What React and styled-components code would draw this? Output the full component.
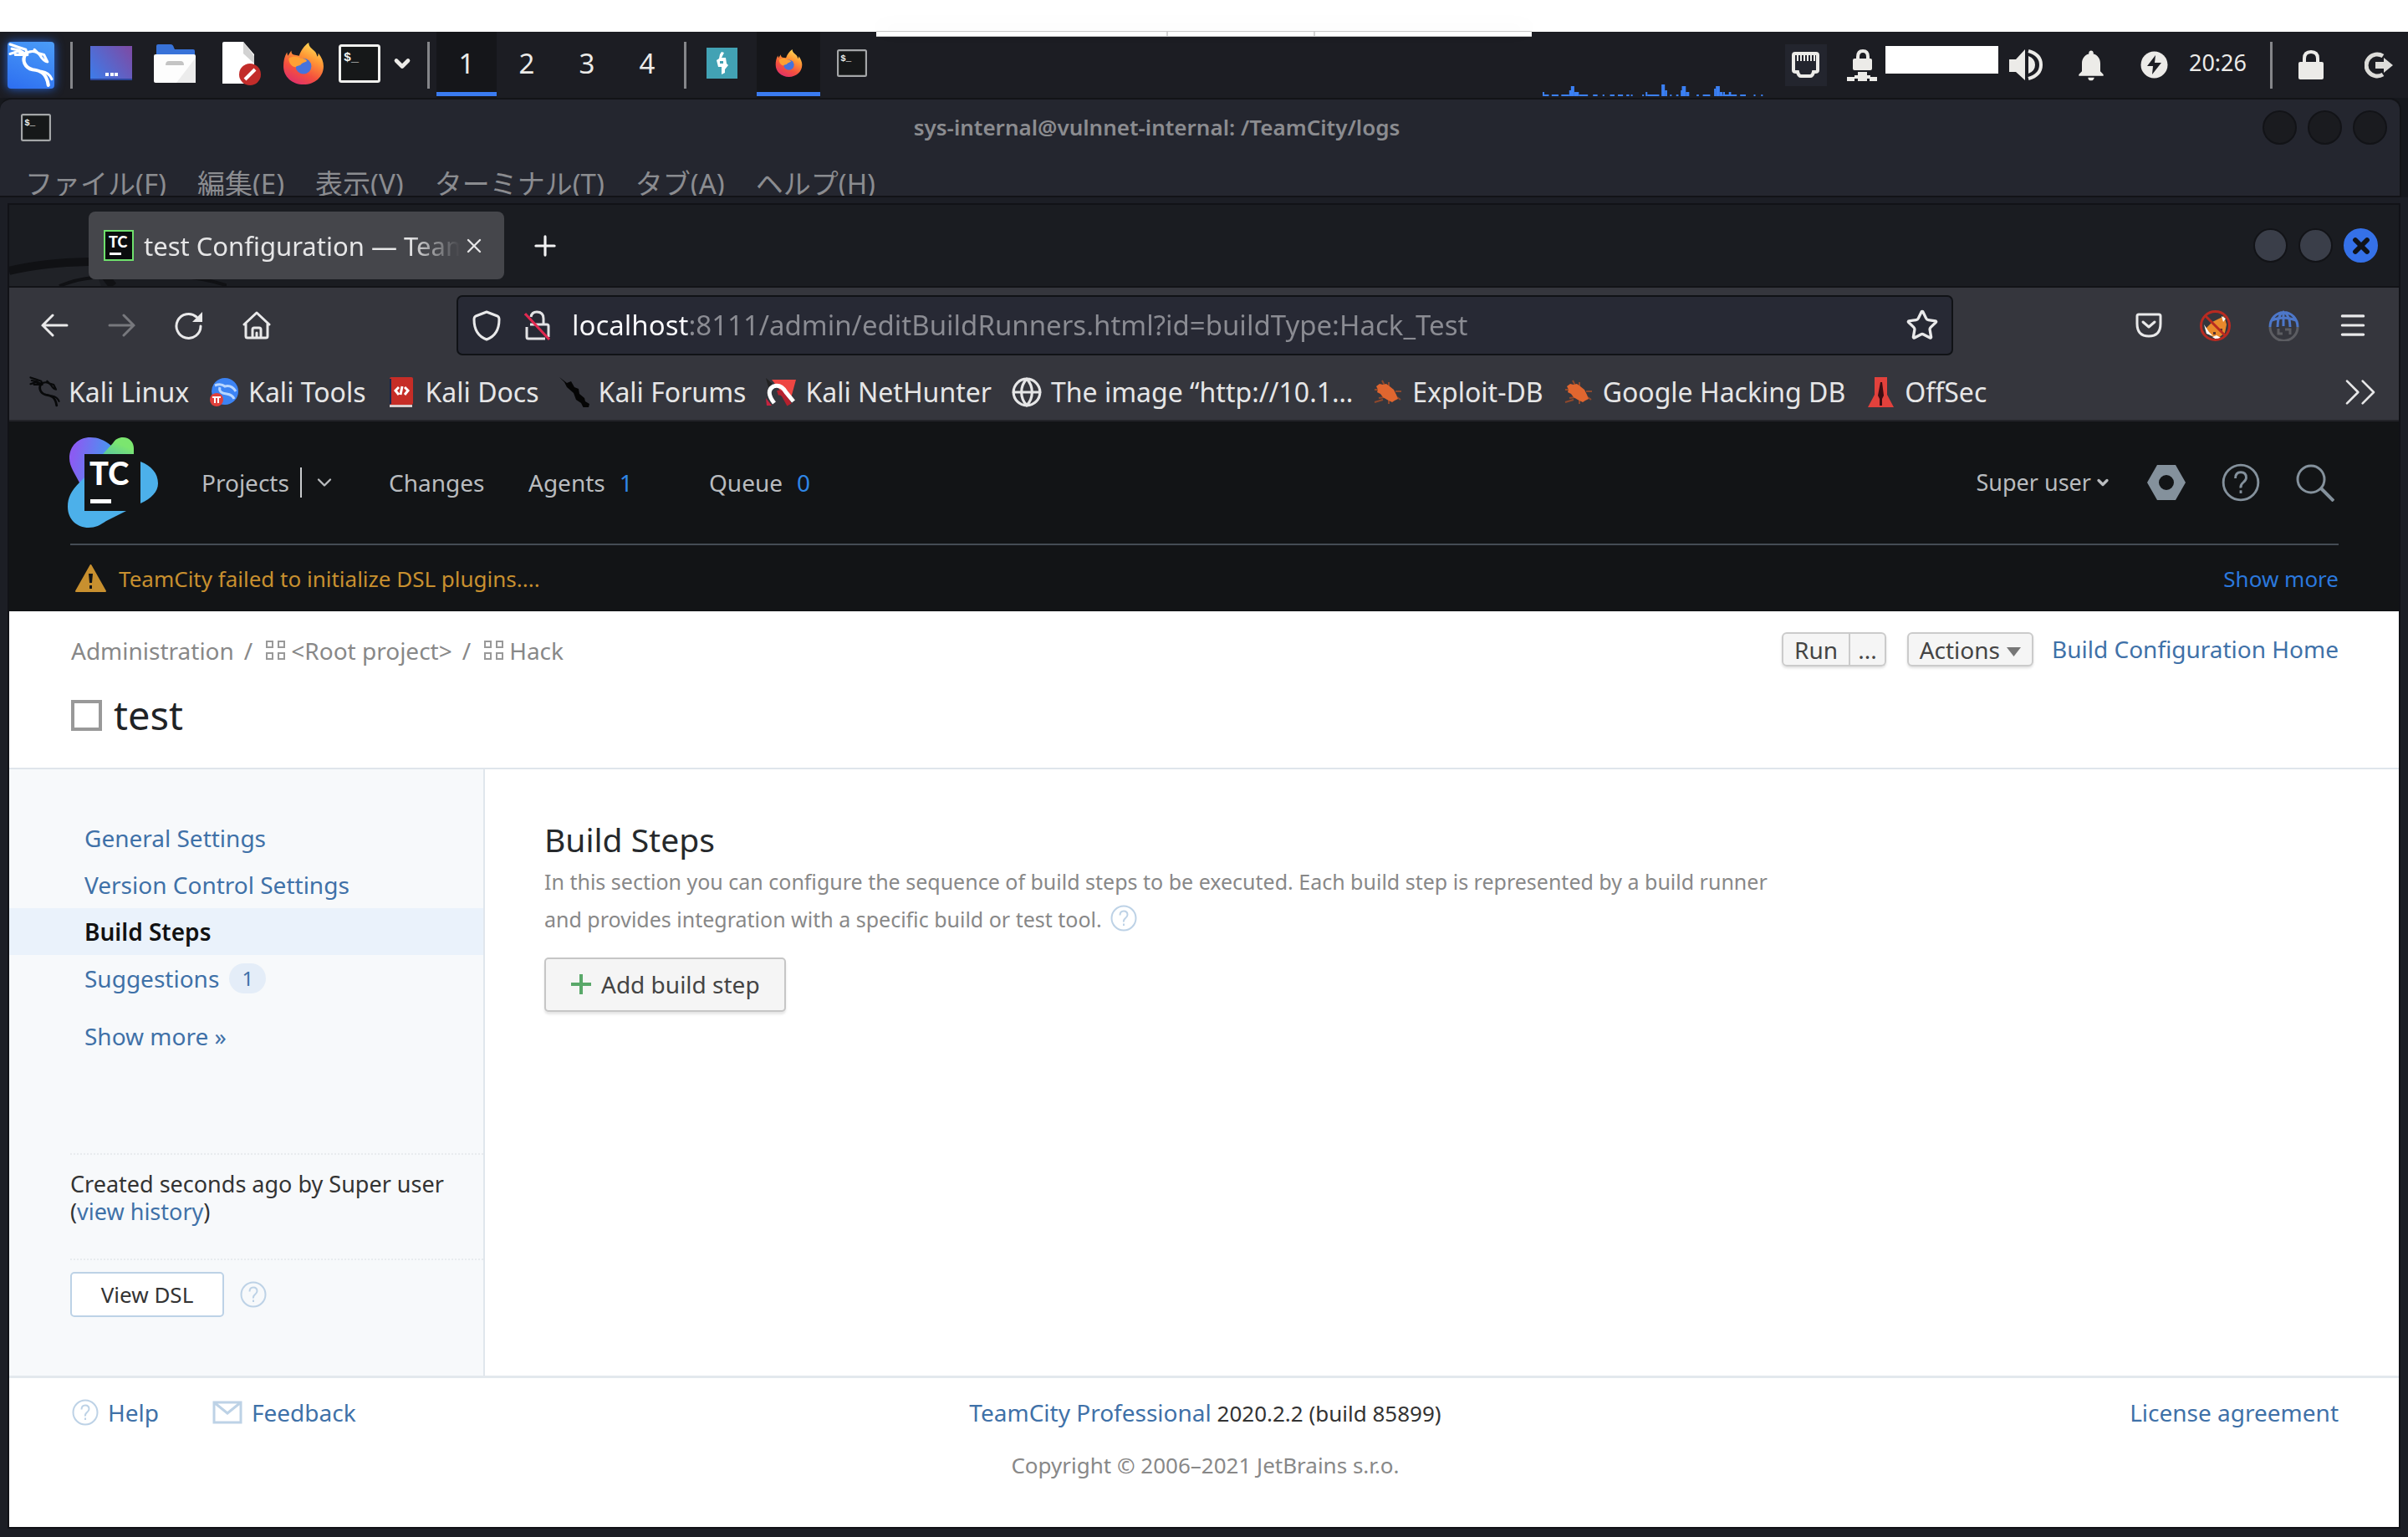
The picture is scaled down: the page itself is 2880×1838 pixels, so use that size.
import React from 'react';
import styled, { createGlobalStyle, css } from 'styled-components';
import { ChevronDown, ChevronsRight, Globe, Menu, Plus, Star, X } from 'lucide-react';
import { MdNotifications } from 'react-icons/md';

const linkColor='#3f71a8';
const paleBlue='#bdd2e6';

const GlobalStyle=createGlobalStyle`
    *{ box-sizing:border-box; }
    body{
        margin:0;
        background:#16181d;
        font-family:"Noto Sans","Noto Sans CJK JP",sans-serif;
    }
    button,input{ font-family:inherit; }
    button{ border:0; background:none; padding:0; color:inherit; cursor:pointer; }
    a{ text-decoration:none; }
    svg{ display:block; flex:none; }
    h1,h2,p,ul{ margin:0; padding:0; font-weight:400; }
    ul{ list-style:none; }
`;

/* ---------- icons ---------- */

const DragonIcon=({ size, weight=3 })=>(
    <svg width={size} height={size} viewBox="0 0 52 52" fill="none" stroke="currentColor" strokeWidth={weight} strokeLinecap="round" strokeLinejoin="round">
        <path d="M2 2l9 3 9 3 2 6M4 7l9 2 7 4M2 13l9-3 8 4M8 14l8 0"/>
        <path strokeWidth={weight+1} d="M20 13c-5 7-1 16 8 18 9 1 16 4 18 18"/>
        <path d="M20 13c4-4 12-4 16 1 3 5 6 8 9 8M30 8l4 4 7 2 4 8M38 33c7 1 10 4 12 9"/>
    </svg>
);

const FirefoxIcon=({ size, id })=>(
    <svg width={size} height={size} viewBox="0 0 48 48">
        <defs>
            <linearGradient id={id} x1="0.8" y1="0" x2="0.3" y2="1">
                <stop offset="0" stopColor="#ffe45c"/>
                <stop offset="0.35" stopColor="#ff9a36"/>
                <stop offset="0.7" stopColor="#f4503e"/>
                <stop offset="1" stopColor="#e0306a"/>
            </linearGradient>
        </defs>
        <path fill={`url(#${id})`} d="M30 0c0 5 4 7 7 10 2 2 2 4 3 6 1-1 1-3 1-4 4 5 6 10 6 15 0 12-10 21-23 21S1 39 1 27c0-6 1-11 4-16l1 4 4-6c0 3 1 4 3 5l6 1c2-6 6-12 11-15z"/>
        <circle cx="24" cy="27" r="9" fill="#4673dc"/>
        <path fill="#ffa033" d="M7 18c5-3 10-2 14 0 3 0 6 1 7 3-3 2-6 2-7 4-1 2-4 1-6 3-4 0-8-4-8-10z"/>
    </svg>
);

const TerminalIcon=({ width, height, color='#a4a6a8' })=>(
    <svg width={width} height={height} viewBox="0 0 50 46" preserveAspectRatio="none">
        <rect x="1.5" y="1.5" width="47" height="43" rx="2" fill="#161819" stroke={color} strokeWidth="3"/>
        <text x="6" y="20" fontSize="15" fontWeight="700" fill="#f0f0ee" fontFamily="Liberation Mono">$_</text>
    </svg>
);

const DesktopIcon=()=>(
    <svg width="50" height="41" viewBox="0 0 50 41">
        <defs>
            <linearGradient id="desk" x1="0" y1="0.8" x2="1" y2="0.2">
                <stop offset="0" stopColor="#4079e6"/>
                <stop offset="1" stopColor="#7a4da8"/>
            </linearGradient>
        </defs>
        <rect width="50" height="41" fill="url(#desk)"/>
        <path fill="#2b459b" d="M0 39h50v2H0z"/>
        <path fill="#fff" d="M18 32h4v4h-4zM24 32h4v4h-4zM29 32h4v4h-4z"/>
    </svg>
);

const FolderIcon=()=>(
    <svg width="50" height="46" viewBox="0 0 50 46">
        <path fill="#3872d8" d="M3 2q0-2 2-2h15q3 0 4 4l1 2h22q2 0 2 2v6H3z"/>
        <rect y="12" width="50" height="34" rx="2" fill="#fdfdfd"/>
        <path fill="#ececec" d="M50 16v30H27z"/>
        <path fill="#c4c4c4" d="M14 25q0-5 4-5h14q4 0 4 5z"/>
    </svg>
);

const DocumentIcon=()=>(
    <svg width="46" height="52" viewBox="0 0 46 52">
        <path fill="#fff" d="M0 2q0-2 2-2h23l13 15v35H0z"/>
        <path fill="#d2d2d2" d="M25 0l13 17v9L25 14z"/>
        <circle cx="33" cy="39" r="13" fill="#c22c2a"/>
        <path stroke="#fff" strokeWidth="4" d="M27 45l12-12"/>
    </svg>
);

const BurpIcon=()=>(
    <svg width="37" height="37" viewBox="0 0 37 37">
        <rect width="37" height="37" fill="#42a2b4"/>
        <path fill="#fff" d="M18 5l3 1-3 6h5l1 7 2 2-4 5v4l-4 2v-9h-4l-2-8 3-2 1-5z"/>
        <path fill="#42a2b4" d="M16 16h4v3h-4z"/>
    </svg>
);

const EthernetIcon=()=>(
    <svg width="33" height="31" viewBox="0 0 33 31" fill="none" stroke="#ecebe8">
        <path strokeWidth="4" d="M4 2h25q2 0 2 2v18q0 2-3 2h-2q-1 5-4 5H11q-3 0-4-5H5q-3 0-3-2V4q0-2 2-2z"/>
        <path strokeWidth="2" d="M7 4v7M11 4v7M15 4v7M19 4v7M23 4v7M27 4v7"/>
    </svg>
);

const VpnIcon=()=>(
    <svg width="36" height="38" viewBox="0 0 36 38" fill="#ecebe8">
        <path fill="none" stroke="#ecebe8" strokeWidth="4" d="M13 13V9q0-7 6-7t6 7v4"/>
        <rect x="7" y="11" width="23" height="14" rx="2"/>
        <path d="M0 33h9v-2h4v-4h11v4h4v2h8v5h-9v-3h-3v3H13v-3H9v3H0z"/>
    </svg>
);

const VolumeIcon=()=>(
    <svg width="40" height="37" viewBox="0 0 40 37">
        <path fill="#ecebe8" d="M0 12h8L19 0v37L8 27H0zM23 8q8 3 8 10.500T23 29z"/>
        <path fill="none" stroke="#ecebe8" strokeWidth="4" d="M23 2q15 4 15 16.500T23 35"/>
    </svg>
);

const PowerIcon=()=>(
    <svg width="33" height="33" viewBox="0 0 33 33">
        <circle cx="16.500" cy="16.500" r="16" fill="#ecebe8"/>
        <path fill="#1c1d23" d="M18 5L8 18h7l-1 10 11-14h-8z"/>
    </svg>
);

const PadlockIcon=()=>(
    <svg width="32" height="35" viewBox="0 0 32 35">
        <path fill="none" stroke="#ecebe8" strokeWidth="4" d="M8 16V10q0-8 8-8t8 8v6"/>
        <rect y="14" x="1" width="30" height="21" rx="2" fill="#ecebe8"/>
    </svg>
);

const LogoutIcon=()=>(
    <svg width="34" height="32" viewBox="0 0 34 32">
        <path fill="none" stroke="#dddcd9" strokeWidth="5" d="M22 5A13 13 0 1 0 22 27"/>
        <path fill="#dddcd9" d="M13 12h10V7l11 9-11 9v-5H13z"/>
    </svg>
);

const loadSamples=[
    [0,3,5],[3,8,2],[16,12,2],[33,14,2],[47,4,7],[50,6,12],[56,8,5],[64,16,2],[89,8,2],[106,3,2],[119,8,2],
    [133,9,2],[148,5,2],[156,3,2],[176,3,2],[182,3,5],[185,21,2],[210,6,14],[216,4,7],[225,3,2],[236,4,2],
    [244,3,7],[246,7,12],[253,6,5],[272,4,2],[283,13,2],[303,3,9],[306,7,12],[313,5,5],[319,3,5],[318,25,2],
    [329,4,5],[349,10,2],[373,3,2],[386,3,2]
];

const LoadGraph=()=>(
    <svg width="264" height="15" viewBox="0 0 390 15" preserveAspectRatio="none" fill="#3b80f4">
        {loadSamples.map(([x,w,h])=><rect key={x} x={x} y={15-h} width={w} height={h}/>)}
    </svg>
);

const BackIcon=()=>(
    <svg width="33" height="28" viewBox="0 0 33 28" fill="none" stroke="currentColor" strokeWidth="3" strokeLinecap="round">
        <path d="M31 14H2M14 2L2 14l12 12"/>
    </svg>
);

const ForwardIcon=()=>(
    <svg width="33" height="28" viewBox="0 0 33 28" fill="none" stroke="currentColor" strokeWidth="3" strokeLinecap="round">
        <path d="M2 14h29M19 2l12 12-12 12"/>
    </svg>
);

const ReloadIcon=()=>(
    <svg width="34" height="34" viewBox="0 0 34 34">
        <path fill="none" stroke="currentColor" strokeWidth="3" strokeLinecap="round" d="M31 18A14.500 14.500 0 1 1 26 7"/>
        <path fill="currentColor" d="M33 1v12H21z"/>
    </svg>
);

const HomeIcon=()=>(
    <svg width="34" height="34" viewBox="0 0 34 34" fill="none" stroke="currentColor" strokeWidth="3" strokeLinejoin="round" strokeLinecap="round">
        <path d="M2 16L17 2l15 14M4 15v15q0 2 2 2h22q2 0 2-2V15M12 32V22q0-2 2-2h6q2 0 2 2v10M17 26v6"/>
    </svg>
);

const ShieldIcon=()=>(
    <svg width="34" height="37" viewBox="0 0 34 37" fill="none" stroke="currentColor" strokeWidth="3" strokeLinejoin="round">
        <path d="M17 2l13 5q2 1 2 4c0 12-4 20-15 24C6 31 2 23 2 11q0-3 2-4z"/>
    </svg>
);

const InsecureIcon=()=>(
    <svg width="32" height="36" viewBox="0 0 32 36" fill="none" strokeWidth="3">
        <path stroke="#e3e3e5" d="M8 8q1-6 7-6 8 0 8 8v7M7 17h20q2 0 2 2v13M3 20v12q0 2 2 2h20"/>
        <path stroke="#e22850" d="M1 4l29 31"/>
    </svg>
);

const PocketIcon=()=>(
    <svg width="32" height="30" viewBox="0 0 32 30" fill="none" stroke="#e9e9ea" strokeWidth="3" strokeLinecap="round" strokeLinejoin="round">
        <path d="M4 2h24q2 0 2 2v9q0 15-14 15T2 13V4q0-2 2-2z"/>
        <path d="M9 11l7 6 7-6"/>
    </svg>
);

const FoxyProxyIcon=()=>(
    <svg width="37" height="37" viewBox="0 0 37 37">
        <path fill="#e8892b" d="M7 22l8-8 14-7 3 10-2 10-9 7-9-4z"/>
        <path fill="#fff" d="M5 17l6 9 5 5-8-3zM26 7l5 3-3 4zM15 32l5-2 5 3-5 2z"/>
        <path fill="#533" d="M16 26h3v3h-3zM24 22h3v3h-3z"/>
        <circle cx="18.500" cy="18.500" r="17" fill="none" stroke="#b82a21" strokeWidth="3"/>
        <path stroke="#b82a21" strokeWidth="3" d="M7 7l23 23"/>
    </svg>
);

const ProxyGlobeIcon=()=>(
    <svg width="37" height="37" viewBox="0 0 37 37" fill="none" strokeWidth="3">
        <path stroke="#5c5d62" d="M2 20a16 16 0 0 0 33 0M12 22v6h5M20 23h6v6"/>
        <path stroke="#4d77c9" d="M2 20a16 17 0 0 1 33 0M11 20q0-14 7-18 8 4 8 18M18 2v17M4 12q14-6 29 0"/>
    </svg>
);

const ToolsIcon=()=>(
    <svg width="34" height="36" viewBox="0 0 34 36">
        <circle cx="18" cy="17" r="16" fill="#3c83f3"/>
        <path fill="none" stroke="#b8d6ff" strokeWidth="3" d="M6 10q7-3 12 1 8-2 13 6M12 12q-2 7 8 8 7 1 9 6"/>
        <circle cx="8" cy="27" r="8" fill="#e0403b"/>
        <path stroke="#fff" strokeWidth="2" d="M3 24h10M6 24v7M10 24v7"/>
    </svg>
);

const DocsIcon=()=>(
    <svg width="28" height="36" viewBox="0 0 28 36">
        <rect width="28" height="33" rx="2" fill="#c62d27"/>
        <path fill="#17294f" d="M0 2h2v30H0z"/>
        <rect y="33" width="27" height="3" fill="#d8cfcf"/>
        <path fill="none" stroke="#fff" strokeWidth="3" d="M11 12l-4 4 4 5M15 11l-2 10M18 12l4 4-4 5"/>
    </svg>
);

const ForumsIcon=()=>(
    <svg width="36" height="36" viewBox="0 0 36 36">
        <path fill="#050505" d="M0 0l9 7 5-2 4 7 5 2 1 6 6 5 1 4 5 3-1 4-6 1-3-6-6-4-3-8-8-7-3-6z"/>
    </svg>
);

const NetHunterIcon=()=>(
    <svg width="36" height="34" viewBox="0 0 36 34">
        <path fill="#ee4643" d="M7 2h29l-6 22-12-8z"/>
        <path fill="none" stroke="#b5202d" strokeWidth="6" d="M14 18q6-2 9 5l5 9"/>
        <path fill="none" stroke="#fff" strokeWidth="5" d="M10 30Q-1 16 9 10q9-3 15 7l9 11"/>
        <path fill="#c7233f" d="M0 24l7 9H1z"/>
        <path fill="#222" d="M0 0l8 7-5 4z"/>
    </svg>
);

const BugIcon=()=>(
    <svg width="34" height="30" viewBox="0 0 34 30">
        <path fill="none" stroke="#8e482c" strokeWidth="2" d="M10 1l3 6M18 3v6M1 12h6M33 14h-7M28 21l4 3M6 22l7-1M18 24v5M1 27l10-3"/>
        <path fill="#e0662f" d="M3 8l4-3 4 1 4-1 4 3 5 4 3 6 2 5-4 2-3 2-6-3-5-3-3-4-4-2 1-3z"/>
    </svg>
);

const OffSecIcon=()=>(
    <svg width="31" height="36" viewBox="0 0 31 36">
        <path fill="#e2413c" d="M8 0h15v21l8 15H0l8-15z"/>
        <path fill="#3a0d12" d="M15 6h2l2 16-2 4v8h-3v-8l-2-4z"/>
    </svg>
);

const TeamCityLogo=()=>(
    <svg width="109" height="110" viewBox="0 0 109 110">
        <defs>
            <linearGradient id="tcPurple" x1="0" y1="0.3" x2="1" y2="0.5">
                <stop offset="0.1" stopColor="#8a5cf2"/>
                <stop offset="0.9" stopColor="#4b93f0"/>
            </linearGradient>
            <linearGradient id="tcGreen" x1="0.6" y1="0.3" x2="0" y2="1">
                <stop offset="0.1" stopColor="#7be66f"/>
                <stop offset="1" stopColor="#5bc7a0"/>
            </linearGradient>
        </defs>
        <path fill="url(#tcPurple)" d="M52 11C44 4 36 1 27 1 13 1 2 11 2 26c0 10 7 19 13 31l27-30z"/>
        <path fill="url(#tcGreen)" d="M42 21L54 8c3-5 7-7 12-7 8 0 13 6 13 13v7z"/>
        <path fill="#4cb0ea" d="M21 48l-7 7C4 65 0 73 0 84c0 15 11 25 25 25 8 0 14-3 21-8l24-12H40zM87 30c13 5 21 14 21 26 0 10-8 18-21 24z"/>
        <rect x="20" y="21" width="67" height="68" fill="#121416"/>
        <text x="26" y="58" fontFamily="Lato" fontWeight="900" fontSize="38" fill="#fff">TC</text>
        <rect x="27" y="75" width="25" height="5" fill="#fff"/>
    </svg>
);

const TabFavicon=()=>(
    <svg width="36" height="37" viewBox="0 0 36 37">
        <rect x="1" y="1" width="34" height="35" fill="#0a0c0d" stroke="#6fe06c" strokeWidth="2"/>
        <text x="6" y="21" fontFamily="Lato" fontWeight="900" fontSize="18" fill="#fff">TC</text>
        <rect x="7" y="27" width="14" height="3" fill="#fff"/>
    </svg>
);

const WallpaperTrace=styled.svg`
    position:absolute;
    left:0;
    bottom:0;
`;

const WarningIcon=()=>(
    <svg width="37" height="33" viewBox="0 0 37 33">
        <path fill="#c8902f" d="M18.500 1L36 32H1z" stroke="#c8902f" strokeWidth="2" strokeLinejoin="round"/>
        <path fill="#121416" d="M16 11h5l-1 11h-3zM17 25h3v4h-3z"/>
    </svg>
);

const HelpIcon=({ size, color, weight=2 })=>(
    <svg width={size} height={size} viewBox="0 0 32 32" fill="none" stroke={color} strokeWidth={weight}>
        <circle cx="16" cy="16" r="14.500"/>
        <path d="M11.500 12.500q0-5 4.500-5t4.500 4.500q0 2-2.500 4t-2 4.500"/>
        <path d="M16 22.500v2.500"/>
    </svg>
);

const AdminIcon=()=>(
    <svg width="46" height="42" viewBox="0 0 46 42">
        <path fill="#84919c" fillRule="evenodd" d="M12 0h22l12 21-12 21H12L0 21zM23 12a9 9 0 1 0 0 18 9 9 0 0 0 0-18z"/>
    </svg>
);

const SearchIcon=()=>(
    <svg width="46" height="46" viewBox="0 0 46 46" fill="none" stroke="#84919c" strokeWidth="3">
        <circle cx="18" cy="19" r="16"/>
        <path strokeWidth="4" d="M30 30l15 15"/>
    </svg>
);

const ProjectIcon=()=>(
    <svg width="24" height="24" viewBox="0 0 24 24" fill="none" stroke="#999" strokeWidth="2">
        <path d="M1 1h7v7H1zM15 1h7v7h-7zM1 15h7v7H1zM15 15h7v7h-7z"/>
    </svg>
);

const BuildTypeIcon=()=>(
    <svg width="37" height="37" viewBox="0 0 37 37">
        <path fill="none" stroke="#999" strokeWidth="4" d="M2 2h33v33H2z"/>
    </svg>
);

const MailIcon=()=>(
    <svg width="36" height="28" viewBox="0 0 36 28" fill="none" stroke={paleBlue} strokeWidth="3">
        <path d="M2 2h32v24H2zM2 2l16 13L34 2"/>
    </svg>
);

/* ---------- desktop panel ---------- */

const Screen=styled.div`
    min-height:100vh;
    display:flex;
    flex-direction:column;
    position:relative;
`;

const TopBlank=styled.div`
    height:38px;
    background:#fff;
`;

const PopoverEdge=styled.div`
    position:absolute;
    top:37px;
    left:50%;
    margin-left:-392px;
    width:784px;
    height:7px;
    display:grid;
    grid-template-columns:347px 176px 1fr;
    background:#fff;
    border-top:1px solid #c8c8c8;
    border-bottom:1px solid #c8c8c8;
    box-shadow:0 -6px 24px rgba(0,0,0,0.04);
    span + span{ border-left:2px solid #d4d4d4; }
`;

const Taskbar=styled.header`
    height:79px;
    display:flex;
    align-items:center;
    background:#1c1d23;
    color:#ecebe8;
`;

const Launchers=styled.div`
    display:flex;
    align-self:stretch;
    margin:0 14px 0 8px;
`;

const KaliMenu=styled.button`
    width:56px;
    height:56px;
    margin:0 19px 0 9px;
    background:linear-gradient(200deg,#4b9df8,#2d6ef0);
    border-radius:4px;
    box-shadow:0 0 12px #2563d8;
    display:flex;
    align-items:center;
    justify-content:center;
    color:#fff;
`;

const Divider=styled.span`
    width:3px;
    height:56px;
    background:#85868a;
`;

const PanelButton=styled.button`
    width:${({ $w })=>$w || 72}px;
    align-self:stretch;
    display:flex;
    align-items:center;
    justify-content:center;
    padding-bottom:4px;
    font-size:33px;
    ${({ $on })=>$on && css`
        background:#15161a;
        box-shadow:inset 0 -2px #15161a,inset 0 -7px #3a7bf0;
    `}
`;

const Workspaces=styled.nav`
    display:flex;
    align-self:stretch;
    margin:0 8px;
`;

const Tray=styled.div`
    margin-left:auto;
    display:flex;
    align-self:stretch;
    align-items:center;
`;

const GraphSlot=styled.div`
    align-self:flex-end;
    margin:0 26px 2px 0;
`;

const TrayItem=styled.button`
    height:50px;
    display:flex;
    align-items:center;
    justify-content:center;
    width:${({ $w })=>$w || 50}px;
    background:${({ $bg })=>$bg || 'none'};
`;

const HiddenAddress=styled.span`
    width:135px;
    height:33px;
    margin:0 13px 13px 0;
    background:#fff;
`;

const NetworkItems=styled.div`
    display:flex;
    gap:14px;
`;

const Clock=styled.time`
    font-size:27px;
    line-height:36px;
    padding:0 28px 5px 23px;
`;

/* ---------- terminal window ---------- */

const TerminalWindow=styled.section`
    height:119px;
    overflow:hidden;
    border:solid #121317;
    border-width:2px 2px 2px 0;
    border-radius:14px 14px 0 0;
    background:#24262f;
    margin-right:8px;
    color:#8b8c90;
`;

const TerminalTitle=styled.div`
    height:66px;
    display:grid;
    grid-template-columns:auto 1fr auto;
    align-items:center;
    padding:0 15px 0 25px;
    h2{
        font-size:26px;
        font-weight:600;
        line-height:34px;
        text-align:center;
    }
`;

const WindowDots=styled.div`
    display:flex;
    justify-content:flex-end;
    gap:13px;
`;

const WindowDot=styled.button`
    width:41px;
    height:41px;
    border-radius:50%;
    border:2px solid ${({ $line })=>$line || '#121317'};
    background:${({ $bg })=>$bg || '#1a1b1f'};
    display:flex;
    align-items:center;
    justify-content:center;
    color:#101216;
`;

const TerminalMenu=styled.nav`
    display:flex;
    gap:37px;
    padding-left:30px;
    font-size:33px;
    line-height:70px;
`;

/* ---------- browser window ---------- */

const Desktop=styled.div`
    flex:1;
    display:flex;
    padding:9px 11px 12px;
    background:#1c1e25;
`;

const BrowserWindow=styled.section`
    flex:1;
    min-width:0;
    display:flex;
    flex-direction:column;
    outline:2px solid #111217;
`;

const TabBar=styled.div`
    position:relative;
    height:99px;
    display:flex;
    align-items:center;
    padding:0 25px 0 95px;
    background:#1a1c21;
    border-bottom:2px solid #121317;
`;

const Tab=styled.div`
    position:relative;
    width:497px;
    height:81px;
    display:flex;
    align-items:center;
    padding:0 22px 0 18px;
    border-radius:8px;
    background:#45464b;
    color:#e6e6e7;
`;

const TabTitle=styled.span`
    flex:1;
    min-width:0;
    margin-left:12px;
    overflow:hidden;
    white-space:nowrap;
    font-size:31px;
    line-height:44px;
    mask-image:linear-gradient(90deg,#000 84%,transparent);
`;

const TabClose=styled.button`
    margin-left:3px;
`;

const NewTab=styled.button`
    margin:0 auto 0 30px;
    color:#f2f2f3;
`;

const UrlRow=styled.div`
    height:88px;
    display:flex;
    align-items:center;
    padding:2px 36px 0 38px;
    background:#35363d;
    color:#e9e9ea;
`;

const NavButtons=styled.div`
    display:flex;
    align-items:center;
    gap:47px;
    width:497px;
    button:nth-child(2){ color:#77787d; }
`;

const UrlBox=styled.label`
    width:1790px;
    height:72px;
    display:flex;
    align-items:center;
    gap:28px;
    padding:0 15px 0 17px;
    border:2px solid #101216;
    border-radius:7px;
    background:#272934;
`;

const UrlInput=styled.input`
    flex:1;
    min-width:0;
    margin-left:-3px;
    padding:0;
    border:0;
    font-size:33px;
    line-height:46px;
    color:transparent;
    /* host part is brighter than the path */
    background:linear-gradient(90deg,#fbfbfe 139px,#8b8c93 139px);
    background-clip:text;
    -webkit-background-clip:text;
`;

const Extensions=styled.div`
    margin-left:auto;
    display:flex;
    align-items:center;
    gap:45px;
`;

const Bookmarks=styled.nav`
    height:72px;
    display:flex;
    align-items:center;
    gap:25px;
    padding:3px 14px 0 25px;
    background:#35363d;
    color:#e6e6e7;
    border-bottom:2px solid #232429;
    > button{ margin-left:auto; }
`;

const Bookmark=styled.a`
    display:flex;
    align-items:center;
    gap:12px;
    color:inherit;
    font-size:32px;
    line-height:44px;
    white-space:nowrap;
`;

const BookmarkIcon=styled.span`
    width:34px;
    display:flex;
    justify-content:center;
    color:${({ $color })=>$color || 'inherit'};
`;

/* ---------- TeamCity page ---------- */

const Page=styled.div`
    flex:1;
    display:flex;
    flex-direction:column;
    background:#fff;
    color:#333;
    font-size:28px;
    line-height:38px;
`;

const PageHeader=styled.header`
    padding:0 72px 0 73px;
    background:#121416;
    color:#b9bcbf;
`;

const HeaderNav=styled.nav`
    height:148px;
    display:flex;
    align-items:center;
    border-bottom:2px solid #454c54;
`;

const LogoLink=styled.a`
    width:160px;
    margin-left:-3px;
`;

const NavItem=styled.a`
    display:flex;
    align-items:center;
    gap:${({ $gap })=>$gap || 17}px;
    min-width:${({ $w })=>$w}px;
    color:inherit;
    span{ color:#2f86e6; }
    i{
        width:2px;
        height:36px;
        background:#c9cbcd;
    }
`;

const UserTools=styled.div`
    margin-left:auto;
    padding-right:5px;
    display:flex;
    align-items:center;
    gap:43px;
`;

const UserMenu=styled.button`
    display:flex;
    align-items:center;
    gap:4px;
    font-size:27px;
    line-height:38px;
`;

const Alert=styled.div`
    height:79px;
    display:flex;
    align-items:center;
    gap:15px;
    padding-left:6px;
    font-size:26px;
    line-height:36px;
    color:#c8902f;
    a{
        margin-left:auto;
        color:#2b78dc;
    }
`;

const TitleArea=styled.div`
    height:189px;
    display:flex;
    justify-content:space-between;
    padding:25px 72px 0 74px;
    border-bottom:2px solid #dfe5eb;
    h1{
        display:flex;
        align-items:center;
        gap:14px;
        margin-top:23px;
        font-size:47px;
        line-height:64px;
        color:#1f2326;
    }
`;

const Breadcrumbs=styled.div`
    display:flex;
    align-items:center;
    line-height:44px;
    color:#888;
    a{
        display:flex;
        align-items:center;
        gap:6px;
        color:inherit;
    }
    > span{ margin:0 16px 0 12px; }
`;

const PageActions=styled.div`
    display:flex;
    align-items:flex-start;
    line-height:40px;
    a{ color:${linkColor}; }
`;

const smallButton=css`
    height:41px;
    padding:0 13px;
    border:2px solid #cbcbcb;
    background:#f5f5f5;
    color:#444;
    font-size:28px;
    line-height:34px;
`;

const RunGroup=styled.div`
    display:flex;
    margin-right:25px;
    border-radius:6px;
    box-shadow:0 2px 3px rgba(0,0,0,0.12);
    button{
        ${smallButton}
        border-radius:6px 0 0 6px;
    }
    button + button{
        padding:0 9px;
        border-left:0;
        border-radius:0 6px 6px 0;
    }
`;

const ActionsButton=styled.button`
    ${smallButton}
    display:flex;
    align-items:center;
    gap:8px;
    margin-right:22px;
    border-radius:6px;
    box-shadow:0 2px 3px rgba(0,0,0,0.12);
    svg{ margin-top:6px; }
`;

const Body=styled.div`
    flex:1;
    display:flex;
`;

const Sidebar=styled.aside`
    width:569px;
    padding-top:54px;
    background:#f7f9fb;
    border-right:2px solid #e0e6ec;
`;

const MenuItem=styled.li`
    height:56px;
    margin-top:${({ $apart })=>($apart ? 13 : 0)}px;
    display:flex;
    align-items:center;
    gap:12px;
    padding-left:90px;
    background:${({ $on })=>($on ? '#eaf2fb' : 'none')};
    a{
        color:${({ $on })=>($on ? '#111' : linkColor)};
        font-weight:${({ $on })=>($on ? 600 : 400)};
    }
`;

const Badge=styled.span`
    width:44px;
    height:36px;
    border-radius:18px;
    background:#e4edf8;
    color:${linkColor};
    font-size:24px;
    line-height:36px;
    text-align:center;
`;

const SideBlock=styled.div`
    margin-left:73px;
    border-top:2px dotted #e8ebee;
    p{
        padding:18px 0 40px;
        font-size:27px;
        line-height:33px;
    }
    a{ color:${linkColor}; }
`;

const MenuList=styled.ul`
    padding-bottom:112px;
`;

const DslRow=styled.div`
    display:flex;
    align-items:center;
    gap:19px;
    padding:14px 0 60px;
`;

const DslButton=styled.button`
    width:184px;
    height:54px;
    border:2px solid ${paleBlue};
    border-radius:5px;
    background:#fff;
    color:#333;
    font-size:26px;
`;

const Content=styled.main`
    flex:1;
    padding:56px 71px;
    h2{
        font-size:39px;
        line-height:56px;
        color:#26292c;
    }
    p{
        max-width:1470px;
        font-size:25px;
        line-height:45px;
        color:#888;
    }
    p svg{
        display:inline-block;
        margin-left:4px;
        vertical-align:-5px;
    }
`;

const AddButton=styled.button`
    height:65px;
    display:flex;
    align-items:center;
    gap:12px;
    margin-top:23px;
    padding:0 29px 2px 30px;
    border:2px solid #c6c6c6;
    border-radius:5px;
    background:#f5f5f5;
    box-shadow:0 3px 3px rgba(0,0,0,0.1);
    color:#444;
    font-size:28px;
`;

const Footer=styled.footer`
    display:grid;
    grid-template-columns:1fr auto 1fr;
    align-items:start;
    height:181px;
    padding:22px 72px 0 75px;
    border-top:3px solid #e3e8ed;
    a{ color:${linkColor}; }
`;

const FooterLinks=styled.div`
    display:flex;
    gap:64px;
    a{
        display:flex;
        align-items:center;
        gap:11px;
    }
`;

const Version=styled.div`
    text-align:center;
    font-size:26px;
    a{ font-size:28px; }
    p{
        margin-top:24px;
        color:#888;
    }
`;

const License=styled.a`
    justify-self:end;
`;

const bookmarks=[
    { label:'Kali Linux', icon:<DragonIcon size={37}/>, color:'#08090a' },
    { label:'Kali Tools', icon:<ToolsIcon/> },
    { label:'Kali Docs', icon:<DocsIcon/> },
    { label:'Kali Forums', icon:<ForumsIcon/> },
    { label:'Kali NetHunter', icon:<NetHunterIcon/> },
    { label:'The image “http://10.1…', icon:<Globe size={38} strokeWidth={2}/> },
    { label:'Exploit-DB', icon:<BugIcon/> },
    { label:'Google Hacking DB', icon:<BugIcon/> },
    { label:'OffSec', icon:<OffSecIcon/> }
];

const terminalMenus=['ファイル(F)','編集(E)','表示(V)','ターミナル(T)','タブ(A)','ヘルプ(H)'];

const Panel=()=>(
    <Taskbar>
        <KaliMenu aria-label="Applications"><DragonIcon size={54}/></KaliMenu>
        <Divider/>
        <Launchers>
            <PanelButton $w={76} aria-label="Show desktop"><DesktopIcon/></PanelButton>
            <PanelButton $w={76} aria-label="Files"><FolderIcon/></PanelButton>
            <PanelButton $w={84} aria-label="Text editor"><DocumentIcon/></PanelButton>
            <PanelButton $w={64} aria-label="Firefox"><FirefoxIcon size={50} id="ffLaunch"/></PanelButton>
            <PanelButton $w={70} aria-label="Terminal"><TerminalIcon width={50} height={46} color="#f0f0ee"/></PanelButton>
            <PanelButton $w={32} aria-label="More terminals"><ChevronDown size={28} strokeWidth={4}/></PanelButton>
        </Launchers>
        <Divider/>
        <Workspaces>
            <PanelButton $on>1</PanelButton>
            <PanelButton>2</PanelButton>
            <PanelButton>3</PanelButton>
            <PanelButton>4</PanelButton>
        </Workspaces>
        <Divider/>
        <PanelButton $w={84} aria-label="Burp Suite"><BurpIcon/></PanelButton>
        <PanelButton $w={76} $on aria-label="Firefox window"><FirefoxIcon size={33} id="ffTask"/></PanelButton>
        <PanelButton $w={76} aria-label="Terminal window"><TerminalIcon width={36} height={33}/></PanelButton>
        <Tray>
            <GraphSlot><LoadGraph/></GraphSlot>
            <NetworkItems>
                <TrayItem $bg="#23252e" aria-label="Network"><EthernetIcon/></TrayItem>
                <TrayItem $w={56} aria-label="VPN"><VpnIcon/></TrayItem>
            </NetworkItems>
            <HiddenAddress/>
            <TrayItem $w={40} aria-label="Volume"><VolumeIcon/></TrayItem>
            <TrayItem $w={116} aria-label="Notifications"><MdNotifications size={44}/></TrayItem>
            <TrayItem $w={36} aria-label="Power"><PowerIcon/></TrayItem>
            <Clock>20:26</Clock>
            <Divider/>
            <TrayItem $w={92} aria-label="Lock screen"><PadlockIcon/></TrayItem>
            <TrayItem $w={70} aria-label="Log out"><LogoutIcon/></TrayItem>
        </Tray>
    </Taskbar>
);

const Terminal=()=>(
    <TerminalWindow>
        <TerminalTitle>
            <TerminalIcon width={36} height={33}/>
            <h2>sys-internal@vulnnet-internal: /TeamCity/logs</h2>
            <WindowDots>
                <WindowDot aria-label="Minimize"/>
                <WindowDot aria-label="Maximize"/>
                <WindowDot aria-label="Close"/>
            </WindowDots>
        </TerminalTitle>
        <TerminalMenu>
            {terminalMenus.map((m)=><span key={m}>{m}</span>)}
        </TerminalMenu>
    </TerminalWindow>
);

const BrowserChrome=()=>(
    <>
        <TabBar>
            <WallpaperTrace width="260" height="34" viewBox="0 0 260 34" fill="none">
                <path fill="#202227" d="M0 20q50-12 100-13l10 27H0z"/>
                <path stroke="#101114" strokeWidth="10" d="M0 16Q40 6 95 5M112 18l12 16"/>
                <path stroke="#101114" strokeWidth="4" d="M60 34q20-8 40-10M218 24q20 2 44 10"/>
            </WallpaperTrace>
            <Tab>
                <TabFavicon/>
                <TabTitle>test Configuration — TeamCity</TabTitle>
                <TabClose aria-label="Close tab"><X size={28} strokeWidth={2}/></TabClose>
            </Tab>
            <NewTab aria-label="New tab"><Plus size={38} strokeWidth={2}/></NewTab>
            <WindowDots>
                <WindowDot $bg="#3a3e49" aria-label="Minimize"/>
                <WindowDot $bg="#3a3e49" aria-label="Maximize"/>
                <WindowDot $bg="#3571e8" $line="#3571e8" aria-label="Close"><X size={28} strokeWidth={5}/></WindowDot>
            </WindowDots>
        </TabBar>
        <UrlRow>
            <NavButtons>
                <button aria-label="Back"><BackIcon/></button>
                <button aria-label="Forward"><ForwardIcon/></button>
                <button aria-label="Reload"><ReloadIcon/></button>
                <button aria-label="Home"><HomeIcon/></button>
            </NavButtons>
            <UrlBox>
                <ShieldIcon/>
                <InsecureIcon/>
                <UrlInput aria-label="Address" defaultValue="localhost:8111/admin/editBuildRunners.html?id=buildType:Hack_Test"/>
                <Star size={40} strokeWidth={2}/>
            </UrlBox>
            <Extensions>
                <PocketIcon/>
                <FoxyProxyIcon/>
                <ProxyGlobeIcon/>
                <Menu size={38} strokeWidth={2}/>
            </Extensions>
        </UrlRow>
        <Bookmarks>
            {bookmarks.map((b)=>(
                <Bookmark key={b.label} href="#">
                    <BookmarkIcon $color={b.color}>{b.icon}</BookmarkIcon>
                    {b.label}
                </Bookmark>
            ))}
            <button aria-label="More bookmarks"><ChevronsRight size={64} strokeWidth={1}/></button>
        </Bookmarks>
    </>
);

const TeamCityHeader=()=>(
    <PageHeader>
        <HeaderNav>
            <LogoLink href="#" aria-label="TeamCity"><TeamCityLogo/></LogoLink>
            <NavItem href="#" $w={224} $gap={13}>Projects<i/><ChevronDown size={28} strokeWidth={2}/></NavItem>
            <NavItem href="#" $w={167}>Changes</NavItem>
            <NavItem href="#" $w={216}>Agents <span>1</span></NavItem>
            <NavItem href="#">Queue <span>0</span></NavItem>
            <UserTools>
                <UserMenu>Super user<ChevronDown size={20} strokeWidth={4}/></UserMenu>
                <AdminIcon/>
                <HelpIcon size={46} color="#84919c"/>
                <SearchIcon/>
            </UserTools>
        </HeaderNav>
        <Alert>
            <WarningIcon/>
            TeamCity failed to initialize DSL plugins....
            <a href="#">Show more</a>
        </Alert>
    </PageHeader>
);

const BuildConfiguration=()=>(
    <>
        <TitleArea>
            <div>
                <Breadcrumbs>
                    <a href="#">Administration</a>
                    <span>/</span>
                    <a href="#"><ProjectIcon/>&lt;Root project&gt;</a>
                    <span>/</span>
                    <a href="#"><ProjectIcon/>Hack</a>
                </Breadcrumbs>
                <h1><BuildTypeIcon/>test</h1>
            </div>
            <PageActions>
                <RunGroup>
                    <button>Run</button>
                    <button>...</button>
                </RunGroup>
                <ActionsButton>
                    Actions
                    <svg width="17" height="11" viewBox="0 0 17 11"><path fill="#777" d="M0 0h17L8.500 11z"/></svg>
                </ActionsButton>
                <a href="#">Build Configuration Home</a>
            </PageActions>
        </TitleArea>
        <Body>
            <Sidebar>
                <MenuList>
                    <MenuItem><a href="#">General Settings</a></MenuItem>
                    <MenuItem><a href="#">Version Control Settings</a></MenuItem>
                    <MenuItem $on><a href="#">Build Steps</a></MenuItem>
                    <MenuItem><a href="#">Suggestions</a><Badge>1</Badge></MenuItem>
                    <MenuItem $apart><a href="#">Show more »</a></MenuItem>
                </MenuList>
                <SideBlock>
                    <p>Created seconds ago by Super user<br/>(<a href="#">view history</a>)</p>
                </SideBlock>
                <SideBlock>
                    <DslRow>
                        <DslButton>View DSL</DslButton>
                        <HelpIcon size={32} color={paleBlue}/>
                    </DslRow>
                </SideBlock>
            </Sidebar>
            <Content>
                <h2>Build Steps</h2>
                <p>
                    In this section you can configure the sequence of build steps to be executed. Each build step is represented by a build runner and provides integration with a specific build or test tool. <HelpIcon size={32} color={paleBlue}/>
                </p>
                <AddButton>
                    <svg width="24" height="24" viewBox="0 0 24 24"><path stroke="#59a869" strokeWidth="4" d="M12 0v24M0 12h24"/></svg>
                    Add build step
                </AddButton>
            </Content>
        </Body>
    </>
);

export default function App(){
    return (
        <Screen>
            <GlobalStyle/>
            <TopBlank/>
            <PopoverEdge><span/><span/><span/></PopoverEdge>
            <Panel/>
            <Terminal/>
            <Desktop>
                <BrowserWindow>
                    <BrowserChrome/>
                    <Page>
                        <TeamCityHeader/>
                        <BuildConfiguration/>
                        <Footer>
                            <FooterLinks>
                                <a href="#"><HelpIcon size={32} color={paleBlue}/>Help</a>
                                <a href="#"><MailIcon/>Feedback</a>
                            </FooterLinks>
                            <Version>
                                <a href="#">TeamCity Professional</a> 2020.2.2 (build 85899)
                                <p>Copyright © 2006–2021 JetBrains s.r.o.</p>
                            </Version>
                            <License href="#">License agreement</License>
                        </Footer>
                    </Page>
                </BrowserWindow>
            </Desktop>
        </Screen>
    );
}
